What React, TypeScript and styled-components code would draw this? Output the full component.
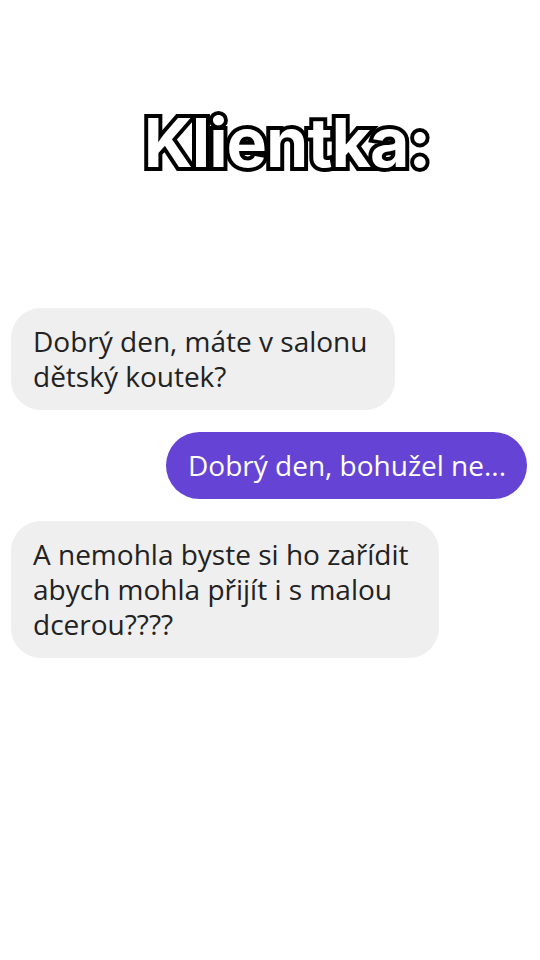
import React from "react";
import styled, { createGlobalStyle } from "styled-components";

const Global = createGlobalStyle`
  html, body { margin: 0; padding: 0; background: #ffffff; }
  body { width: 540px; height: 960px; overflow: hidden; }
`;

const Page = styled.div`
  width: 540px;
  height: 960px;
  background: #ffffff;
  display: flex;
  flex-direction: column;
  font-family: "Open Sans", Roboto, sans-serif;
`;

const TitleBar = styled.div`
  display: flex;
  justify-content: center;
  padding: 104px 0 0 34px;
  height: 200px;
  box-sizing: border-box;
`;

const Title = styled.h1`
  margin: 0;
  font-family: Inter, "Open Sans", sans-serif;
  font-weight: 700;
  font-size: 68px;
  line-height: 76px;
  letter-spacing: -1px;
  color: #ffffff;
  -webkit-text-stroke: 8px #000000;
  paint-order: stroke fill;
`;

const Thread = styled.div`
  display: flex;
  flex-direction: column;
  gap: 22px;
  padding: 108px 13px 0 11px;
`;

const Bubble = styled.div<{ $mine?: boolean; $width: number }>`
  box-sizing: border-box;
  width: ${(p) => p.$width}px;
  align-self: ${(p) => (p.$mine ? "flex-end" : "flex-start")};
  background: ${(p) => (p.$mine ? "#6443d5" : "#efefef")};
  color: ${(p) => (p.$mine ? "#ffffff" : "#222222")};
  border-radius: ${(p) => (p.$mine ? "34px" : "30px")};
  padding: 16px 20px 16px 22px;
  font-size: 28px;
  line-height: 35px;
  letter-spacing: 0;
  white-space: nowrap;
`;

export default function App() {
  return (
    <Page>
      <Global />
      <TitleBar>
        <Title>Klientka:</Title>
      </TitleBar>
      <Thread>
        <Bubble $width={384}>
          Dobrý den, máte v salonu
          <br />
          dětský koutek?
        </Bubble>
        <Bubble $mine $width={361}>Dobrý den, bohužel ne...</Bubble>
        <Bubble $width={428}>
          A nemohla byste si ho zařídit
          <br />
          abych mohla přijít i s malou
          <br />
          dcerou????
        </Bubble>
      </Thread>
    </Page>
  );
}
